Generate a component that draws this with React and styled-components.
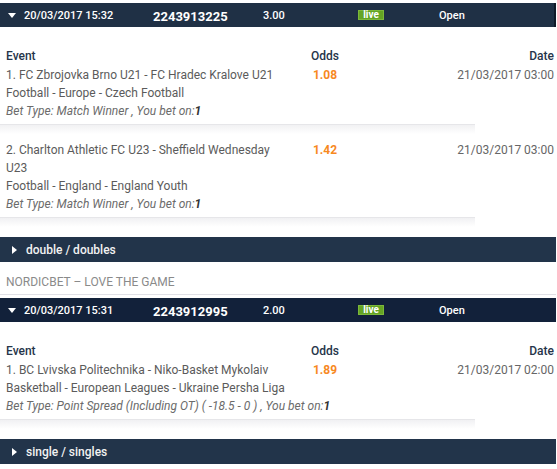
import React from "react";
import styled, { createGlobalStyle } from "styled-components";

const GlobalStyle = createGlobalStyle`
    body {
        margin: 0;
        background: #fff;
        font-family: Roboto, "Liberation Sans", sans-serif;
    }
`

const Page = styled.div`
    width: 556px;
    padding-top: 3px;
`

const TicketHeader = styled.div`
    display: grid;
    grid-template-columns: 153px 110px 95px 81px 1fr;
    align-items: center;
    height: 24px;
    background: ${props => props.$dark ? "#12213a" : "#1f3045"};
    border-right: ${props => props.$edge ? "2px solid #0f1a28" : "none"};
    color: #fff;
    font-size: 11px;
    font-weight: 500;
`

const DateCell = styled.div`
    display: flex;
    align-items: center;
    gap: 8px;
    padding-left: 8px;
`

const CaretDown = styled.span`
    width: 0;
    height: 0;
    border-left: 4px solid transparent;
    border-right: 4px solid transparent;
    border-top: 5px solid #fff;
`

const TicketId = styled.div`
    font-size: 13px;
    font-weight: 700;
    margin-top: 3px;
`

const LiveBadge = styled.span`
    justify-self: start;
    display: inline-block;
    width: 26px;
    height: 10px;
    line-height: 10px;
    text-align: center;
    background: #65a424;
    box-shadow: 0 0 0 1px #7cb83a inset;
    font-size: 10px;
    font-weight: 700;
`

const Body = styled.div`
    padding-top: 20px;
`

const Grid = styled.div`
    display: grid;
    grid-template-columns: 280px 78px 1fr;
    padding: 0 2px 0 6px;
    font-size: 12px;
    line-height: 18px;
`

const Label = styled.div`
    font-weight: 500;
    color: #26354a;
    text-align: ${props => props.$align || "left"};
    margin-bottom: 1px;
`

const EventName = styled.div`
    color: #5b5b5b;
`

const Odds = styled.div`
    text-align: center;
    color: #f7891f;
    font-weight: 700;
`

const MatchDate = styled.div`
    text-align: right;
    color: #666;
`

const Line = styled.div`
    padding-left: 6px;
    font-size: 12px;
    line-height: 18px;
    color: ${props => props.$italic ? "#6b6b6b" : "#5b5b5b"};
    font-style: ${props => props.$italic ? "italic" : "normal"};
    white-space: nowrap;

    b {
        color: #333;
    }
`

const Divider = styled.div`
    width: 475px;
    height: 9px;
    margin: 4px 0 ${props => props.$last ? "10px" : "7px"};
    border-top: 1px solid #e6e6e9;
    background: linear-gradient(to bottom, #f1f1f3, #fff);
`

const TypeBar = styled.div`
    display: flex;
    align-items: center;
    gap: 9px;
    height: 25px;
    padding-left: 12px;
    background: #22344a;
    color: #f2f2f2;
    font-size: 12px;
    font-weight: 500;
`

const CaretRight = styled.span`
    width: 0;
    height: 0;
    border-top: 4px solid transparent;
    border-bottom: 4px solid transparent;
    border-left: 5px solid #fff;
`

const Slogan = styled.div`
    padding: 11px 0 3px 6px;
    font-size: 12px;
    line-height: 18px;
    color: #8a8a8a;
    border-bottom: 1px solid #e0e0e6;
    margin-bottom: 3px;
`

const tickets = [
    {
        date: "20/03/2017 15:32",
        id: "2243913225",
        stake: "3.00",
        status: "Open",
        edge: true,
        type: "double / doubles",
        selections: [
            {
                name: "1. FC Zbrojovka Brno U21 - FC Hradec Kralove U21",
                odds: "1.08",
                date: "21/03/2017 03:00",
                sport: "Football - Europe - Czech Football",
                bet: "Match Winner ",
            },
            {
                name: "2. Charlton Athletic FC U23 - Sheffield Wednesday U23",
                odds: "1.42",
                date: "21/03/2017 03:00",
                sport: "Football - England - England Youth",
                bet: "Match Winner ",
            },
        ],
    },
    {
        date: "20/03/2017 15:31",
        id: "2243912995",
        stake: "2.00",
        status: "Open",
        dark: true,
        type: "single / singles",
        selections: [
            {
                name: "1. BC Lvivska Politechnika - Niko-Basket Mykolaiv",
                odds: "1.89",
                date: "21/03/2017 02:00",
                sport: "Basketball - European Leagues - Ukraine Persha Liga",
                bet: "Point Spread (Including OT) ( -18.5 - 0 ) ",
            },
        ],
    },
]

function Ticket({ ticket, footer }) {
    return (
        <div>
            <TicketHeader $dark={ticket.dark} $edge={ticket.edge}>
                <DateCell><CaretDown />{ticket.date}</DateCell>
                <TicketId>{ticket.id}</TicketId>
                <div>{ticket.stake}</div>
                <LiveBadge>live</LiveBadge>
                <div>{ticket.status}</div>
            </TicketHeader>
            <Body>
                <Grid>
                    <Label>Event</Label>
                    <Label $align="center">Odds</Label>
                    <Label $align="right">Date</Label>
                </Grid>
                {ticket.selections.map((s, i) => (
                    <div key={i}>
                        <Grid>
                            <EventName>{s.name}</EventName>
                            <Odds>{s.odds}</Odds>
                            <MatchDate>{s.date}</MatchDate>
                        </Grid>
                        <Line>{s.sport}</Line>
                        <Line $italic>Bet Type: {s.bet}, You bet on:<b>1</b></Line>
                        <Divider $last={i === ticket.selections.length - 1} />
                    </div>
                ))}
            </Body>
            <TypeBar><CaretRight />{ticket.type}</TypeBar>
            {footer && <Slogan>NORDICBET – LOVE THE GAME</Slogan>}
        </div>
    )
}

export default function App() {
    return (
        <Page>
            <GlobalStyle />
            <Ticket ticket={tickets[0]} footer />
            <Ticket ticket={tickets[1]} />
        </Page>
    )
}
